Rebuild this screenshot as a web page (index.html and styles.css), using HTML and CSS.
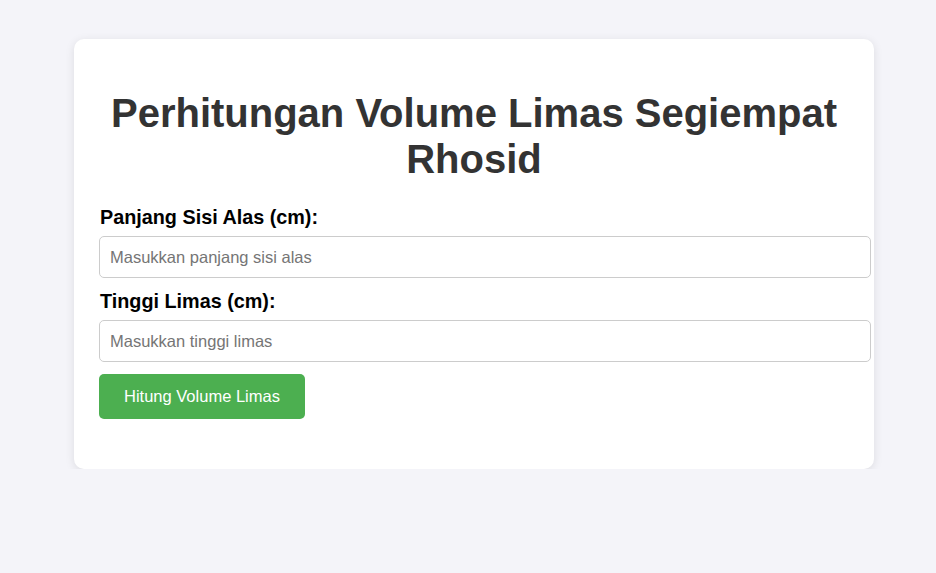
FILE: index.html
```html
<!DOCTYPE html>
<html lang="id">
<head>
<meta charset="utf-8">
<title>Perhitungan Volume Limas Segiempat</title>
<link rel="stylesheet" href="styles.css">
</head>
<body>
<div class="container">
  <h1 class="title">Perhitungan Volume Limas Segiempat Rhosid</h1>
  <label class="label" for="sisi">Panjang Sisi Alas (cm):</label>
  <input class="field" type="number" id="sisi" placeholder="Masukkan panjang sisi alas">
  <label class="label" for="tinggi">Tinggi Limas (cm):</label>
  <input class="field" type="number" id="tinggi" placeholder="Masukkan tinggi limas">
  <button class="btn" type="button">Hitung Volume Limas</button>
</div>
</body>
</html>
```

FILE: styles.css
```css
html, body {
  margin: 0;
  padding: 0;
}
body {
  background: #f4f4f9;
  font-family: "Liberation Sans", Arial, sans-serif;
  padding: 39px 0 0 74px;
}
.container {
  width: 750px;
  padding: 25px 25px 50px;
  background: #fff;
  border-radius: 10px;
  box-shadow: 0 2px 10px rgba(0, 0, 0, 0.1);
}
.title {
  color: #333;
  text-align: center;
  font-size: 40px;
  line-height: 46px;
  font-weight: bold;
  margin: 26px 0 24px;
}
.label {
  display: block;
  font-size: 19.8px;
  line-height: 22px;
  font-weight: bold;
  color: #000;
  margin-bottom: 8px;
  padding-left: 1px;
}
.field {
  display: block;
  width: 100%;
  padding: 11px 10px;
  font-size: 16.5px;
  line-height: 18px;
  font-family: "Liberation Sans", Arial, sans-serif;
  border: 1px solid #ccc;
  border-radius: 5px;
  margin: 0 0 12px;
  color: #333;
}
.field::placeholder {
  color: #757575;
}
.btn {
  display: block;
  background: #4caf50;
  color: #fff;
  border: none;
  border-radius: 5px;
  padding: 13px 25px 14px;
  font-size: 16.5px;
  line-height: 18px;
  font-family: "Liberation Sans", Arial, sans-serif;
  margin-top: 2px;
}
```
